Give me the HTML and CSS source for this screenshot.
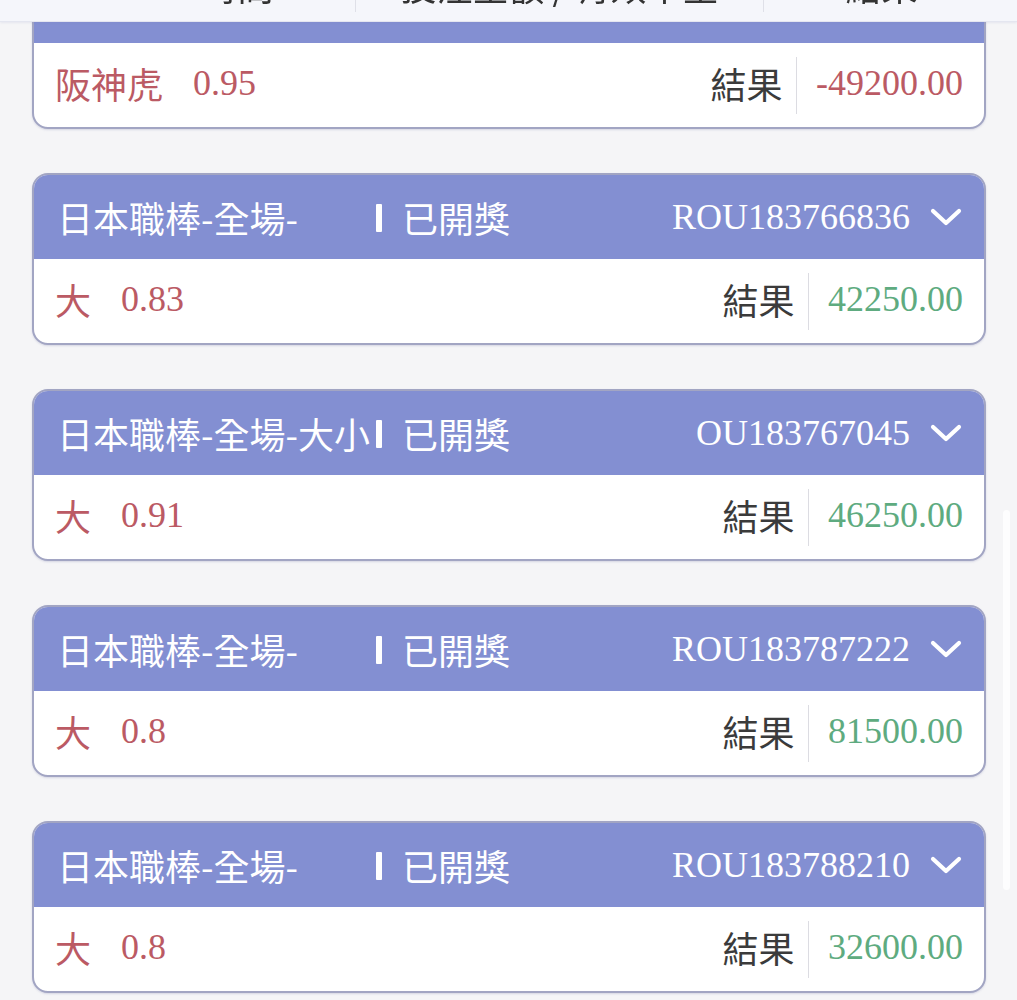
FILE: index.html
```html
<!DOCTYPE html>
<html lang="zh-Hant">
<head>
<meta charset="utf-8">
<link rel="stylesheet" href="styles.css">
</head>
<body>
<div class="topbar">
  <div class="tcol tcol1"><span class="ttext">時間</span></div>
  <div class="tcol tcol2"><span class="ttext">投注金額 / 有效本金</span></div>
  <div class="tcol tcol3"><span class="ttext">結果</span></div>
</div>

<div class="list">
  <div class="card">
    <div class="head">
      <span class="title">日本職棒-全場-讓分</span><span class="bar"></span><span class="status">已開獎</span>
      <span class="oid">HDP183766001</span>
      <svg class="chev" viewBox="0 0 32 18"><polyline points="3,3 16,15 29,3"/></svg>
    </div>
    <div class="body">
      <span class="pick">阪神虎</span><span class="odds">0.95</span>
      <span class="label">結果</span><span class="sep"></span><span class="amt neg">-49200.00</span>
    </div>
  </div>

  <div class="card">
    <div class="head">
      <span class="title">日本職棒-全場-</span><span class="bar"></span><span class="status">已開獎</span>
      <span class="oid">ROU183766836</span>
      <svg class="chev" viewBox="0 0 32 18"><polyline points="3,3 16,15 29,3"/></svg>
    </div>
    <div class="body">
      <span class="pick">大</span><span class="odds">0.83</span>
      <span class="label">結果</span><span class="sep"></span><span class="amt pos">42250.00</span>
    </div>
  </div>

  <div class="card">
    <div class="head">
      <span class="title">日本職棒-全場-大小</span><span class="bar"></span><span class="status">已開獎</span>
      <span class="oid">OU183767045</span>
      <svg class="chev" viewBox="0 0 32 18"><polyline points="3,3 16,15 29,3"/></svg>
    </div>
    <div class="body">
      <span class="pick">大</span><span class="odds">0.91</span>
      <span class="label">結果</span><span class="sep"></span><span class="amt pos">46250.00</span>
    </div>
  </div>

  <div class="card">
    <div class="head">
      <span class="title">日本職棒-全場-</span><span class="bar"></span><span class="status">已開獎</span>
      <span class="oid">ROU183787222</span>
      <svg class="chev" viewBox="0 0 32 18"><polyline points="3,3 16,15 29,3"/></svg>
    </div>
    <div class="body">
      <span class="pick">大</span><span class="odds">0.8</span>
      <span class="label">結果</span><span class="sep"></span><span class="amt pos">81500.00</span>
    </div>
  </div>

  <div class="card">
    <div class="head">
      <span class="title">日本職棒-全場-</span><span class="bar"></span><span class="status">已開獎</span>
      <span class="oid">ROU183788210</span>
      <svg class="chev" viewBox="0 0 32 18"><polyline points="3,3 16,15 29,3"/></svg>
    </div>
    <div class="body">
      <span class="pick">大</span><span class="odds">0.8</span>
      <span class="label">結果</span><span class="sep"></span><span class="amt pos">32600.00</span>
    </div>
  </div>
</div>

<div class="scrolltrack"></div>
</body>
</html>
```

FILE: styles.css
```css
html, body {
  margin: 0;
  padding: 0;
}
body {
  background: #f5f5f7;
  font-family: "Noto Sans CJK TC", "Noto Sans", sans-serif;
  overflow: hidden;
  height: 1000px;
}
.topbar {
  position: fixed;
  top: 0;
  left: 0;
  right: 0;
  height: 21px;
  background: #f5f6fb;
  border-bottom: 1px solid #e4e6f0;
  box-shadow: 0 1px 2px rgba(120, 130, 180, 0.12);
  display: flex;
  z-index: 5;
  overflow: hidden;
}
.tcol {
  display: flex;
  justify-content: center;
  align-items: flex-start;
  overflow: hidden;
  height: 21px;
}
.tcol1 { width: 355px; padding-left: 120px; box-sizing: border-box; }
.tcol2 { width: 407px; border-left: 1px solid #dfe0e8; border-right: 1px solid #dfe0e8; height: 12px; }
.tcol3 { flex: 1; }
.ttext {
  font-size: 36px;
  line-height: 36px;
  color: #333;
  margin-top: -33px;
  white-space: nowrap;
}
.tcol3 .ttext { margin-right: 18px; }

.list {
  margin-top: -43px;
  padding: 0 31px 0 32px;
  display: flex;
  flex-direction: column;
  gap: 44px;
}
.card {
  border: 2px solid #a2a5c3;
  border-radius: 16px;
  overflow: hidden;
  background: #fff;
  box-shadow: 0 1px 2px rgba(120, 125, 170, 0.25);
}
.head {
  height: 84px;
  background: #838fd2;
  display: flex;
  align-items: center;
  padding: 0 22px 0 23px;
  color: #fff;
}
.title {
  font-size: 36px;
  width: 315px;
  white-space: nowrap;
  overflow: hidden;
  line-height: 44px;
}
.bar {
  display: inline-block;
  width: 6px;
  height: 28px;
  background: #fff;
  border-radius: 1px;
  margin-left: 4px;
  margin-top: 2px;
}
.status {
  font-size: 36px;
  margin-left: 20px;
  line-height: 44px;
}
.oid {
  margin-left: auto;
  font-family: "Liberation Serif", "Times New Roman", serif;
  font-size: 36px;
  line-height: 44px;
}
.chev {
  width: 32px;
  height: 18px;
  margin-left: 20px;
  fill: none;
  stroke: #fff;
  stroke-width: 4.2;
  stroke-linecap: round;
  stroke-linejoin: round;
}
.body {
  height: 84px;
  display: flex;
  align-items: center;
  padding: 0 21px 0 21px;
}
.pick, .odds, .label, .amt {
  font-size: 36px;
  line-height: 44px;
  margin-bottom: 4px;
}
.pick {
  color: #bb5a64;
}
.odds {
  font-family: "Liberation Serif", "Times New Roman", serif;
  color: #bb5a64;
  margin-left: 30px;
}
.label {
  margin-left: auto;
  color: #3b3b3b;
}
.sep {
  width: 1.5px;
  height: 57px;
  background: #dcdce2;
  margin: 0 19px 0 13px;
}
.amt {
  font-family: "Liberation Serif", "Times New Roman", serif;
}
.amt.neg { color: #bb5a64; }
.amt.pos { color: #5eab80; }

.scrolltrack {
  position: fixed;
  right: 7px;
  top: 510px;
  width: 7px;
  height: 380px;
  background: rgba(255, 255, 255, 0.8);
  border-radius: 4px;
}
```
